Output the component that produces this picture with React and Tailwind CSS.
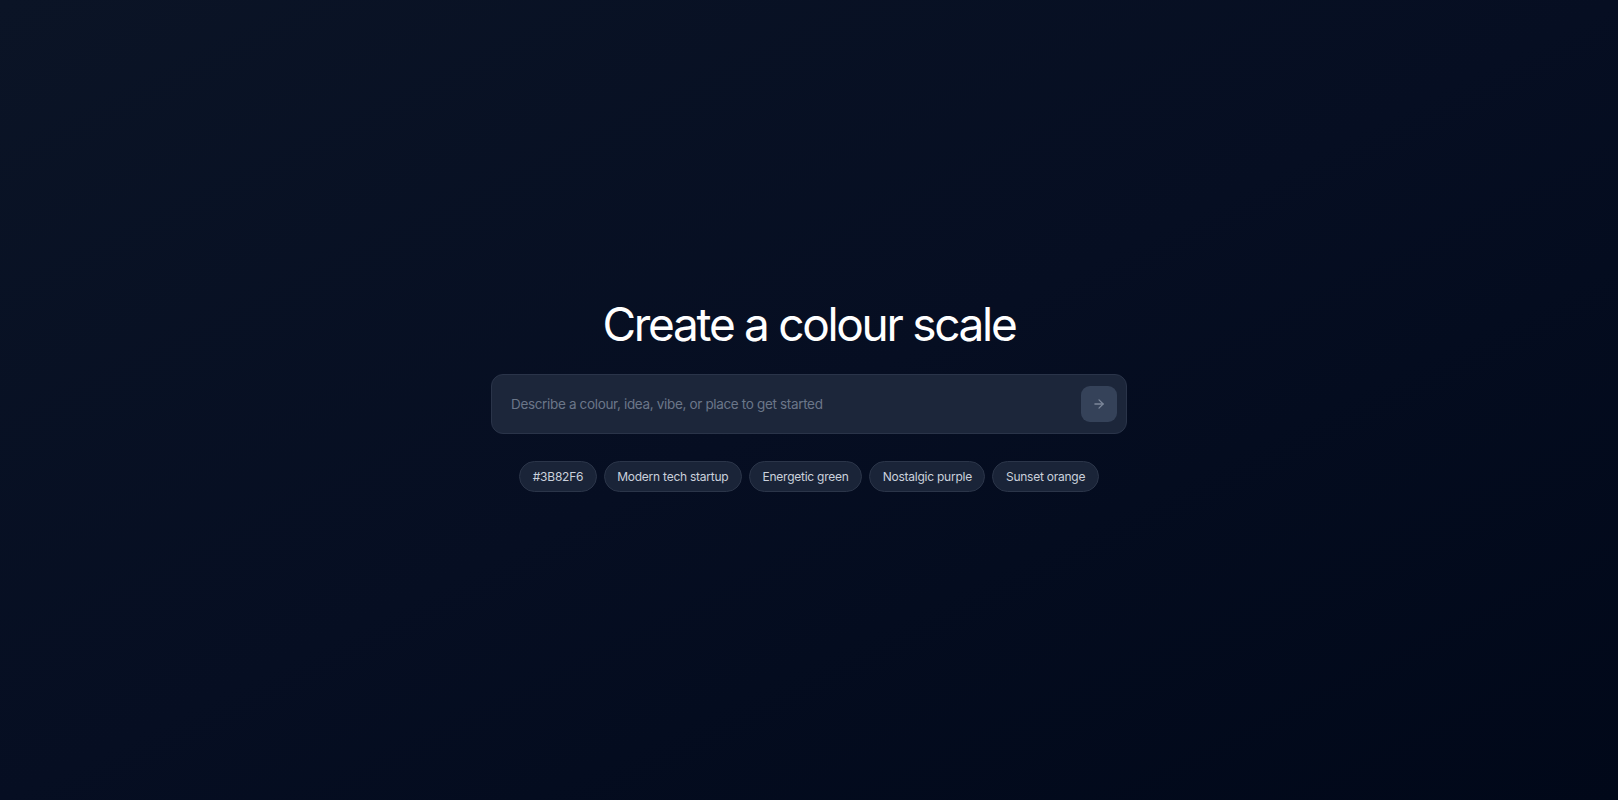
import { useState } from 'react';

const sugestoes = ['#3B82F6', 'Modern tech startup', 'Energetic green', 'Nostalgic purple', 'Sunset orange'];

export default function App() {
  const [texto, setTexto] = useState('');

  return (
    <div
      className="min-h-screen w-full flex flex-col items-center bg-gradient-to-br from-[#0b1426] via-[#060e22] to-[#010819] font-['Inter',sans-serif]"
    >
      <div className="flex flex-col items-center pt-[294px]">
        <h1 className="text-[46px] leading-[60px] font-normal tracking-[-0.05em] text-white">
          Create a colour scale
        </h1>

        <form
          onSubmit={(e) => e.preventDefault()}
          className="mt-[20px] w-[636px] h-[60px] flex items-center pl-[19px] pr-[9px] rounded-[12px] bg-[#1c263a] border border-[#2a3449]"
        >
          <input
            type="text"
            value={texto}
            onChange={(e) => setTexto(e.target.value)}
            placeholder="Describe a colour, idea, vibe, or place to get started"
            className="flex-1 bg-transparent outline-none text-[13.5px] tracking-[-0.025em] text-slate-200 placeholder:text-[#6b7689]"
          />
          <button
            type="submit"
            className="w-[36px] h-[36px] rounded-[9px] bg-[#354259] flex items-center justify-center text-[#7d889b]"
          >
            <svg width="14" height="14" viewBox="0 0 24 24" fill="none" stroke="currentColor" strokeWidth="2.2" strokeLinecap="round" strokeLinejoin="round">
              <path d="M5 12h14" />
              <path d="m12 5 7 7-7 7" />
            </svg>
          </button>
        </form>

        <div className="mt-[27px] flex items-center gap-[7px]">
          {sugestoes.map((s) => (
            <button
              key={s}
              onClick={() => setTexto(s)}
              className="h-[31px] px-[12.5px] rounded-full bg-[#1a2438] border border-[#2b3549] text-[12px] tracking-[-0.02em] text-[#cad1dc]"
            >
              {s}
            </button>
          ))}
        </div>
      </div>
    </div>
  );
}
